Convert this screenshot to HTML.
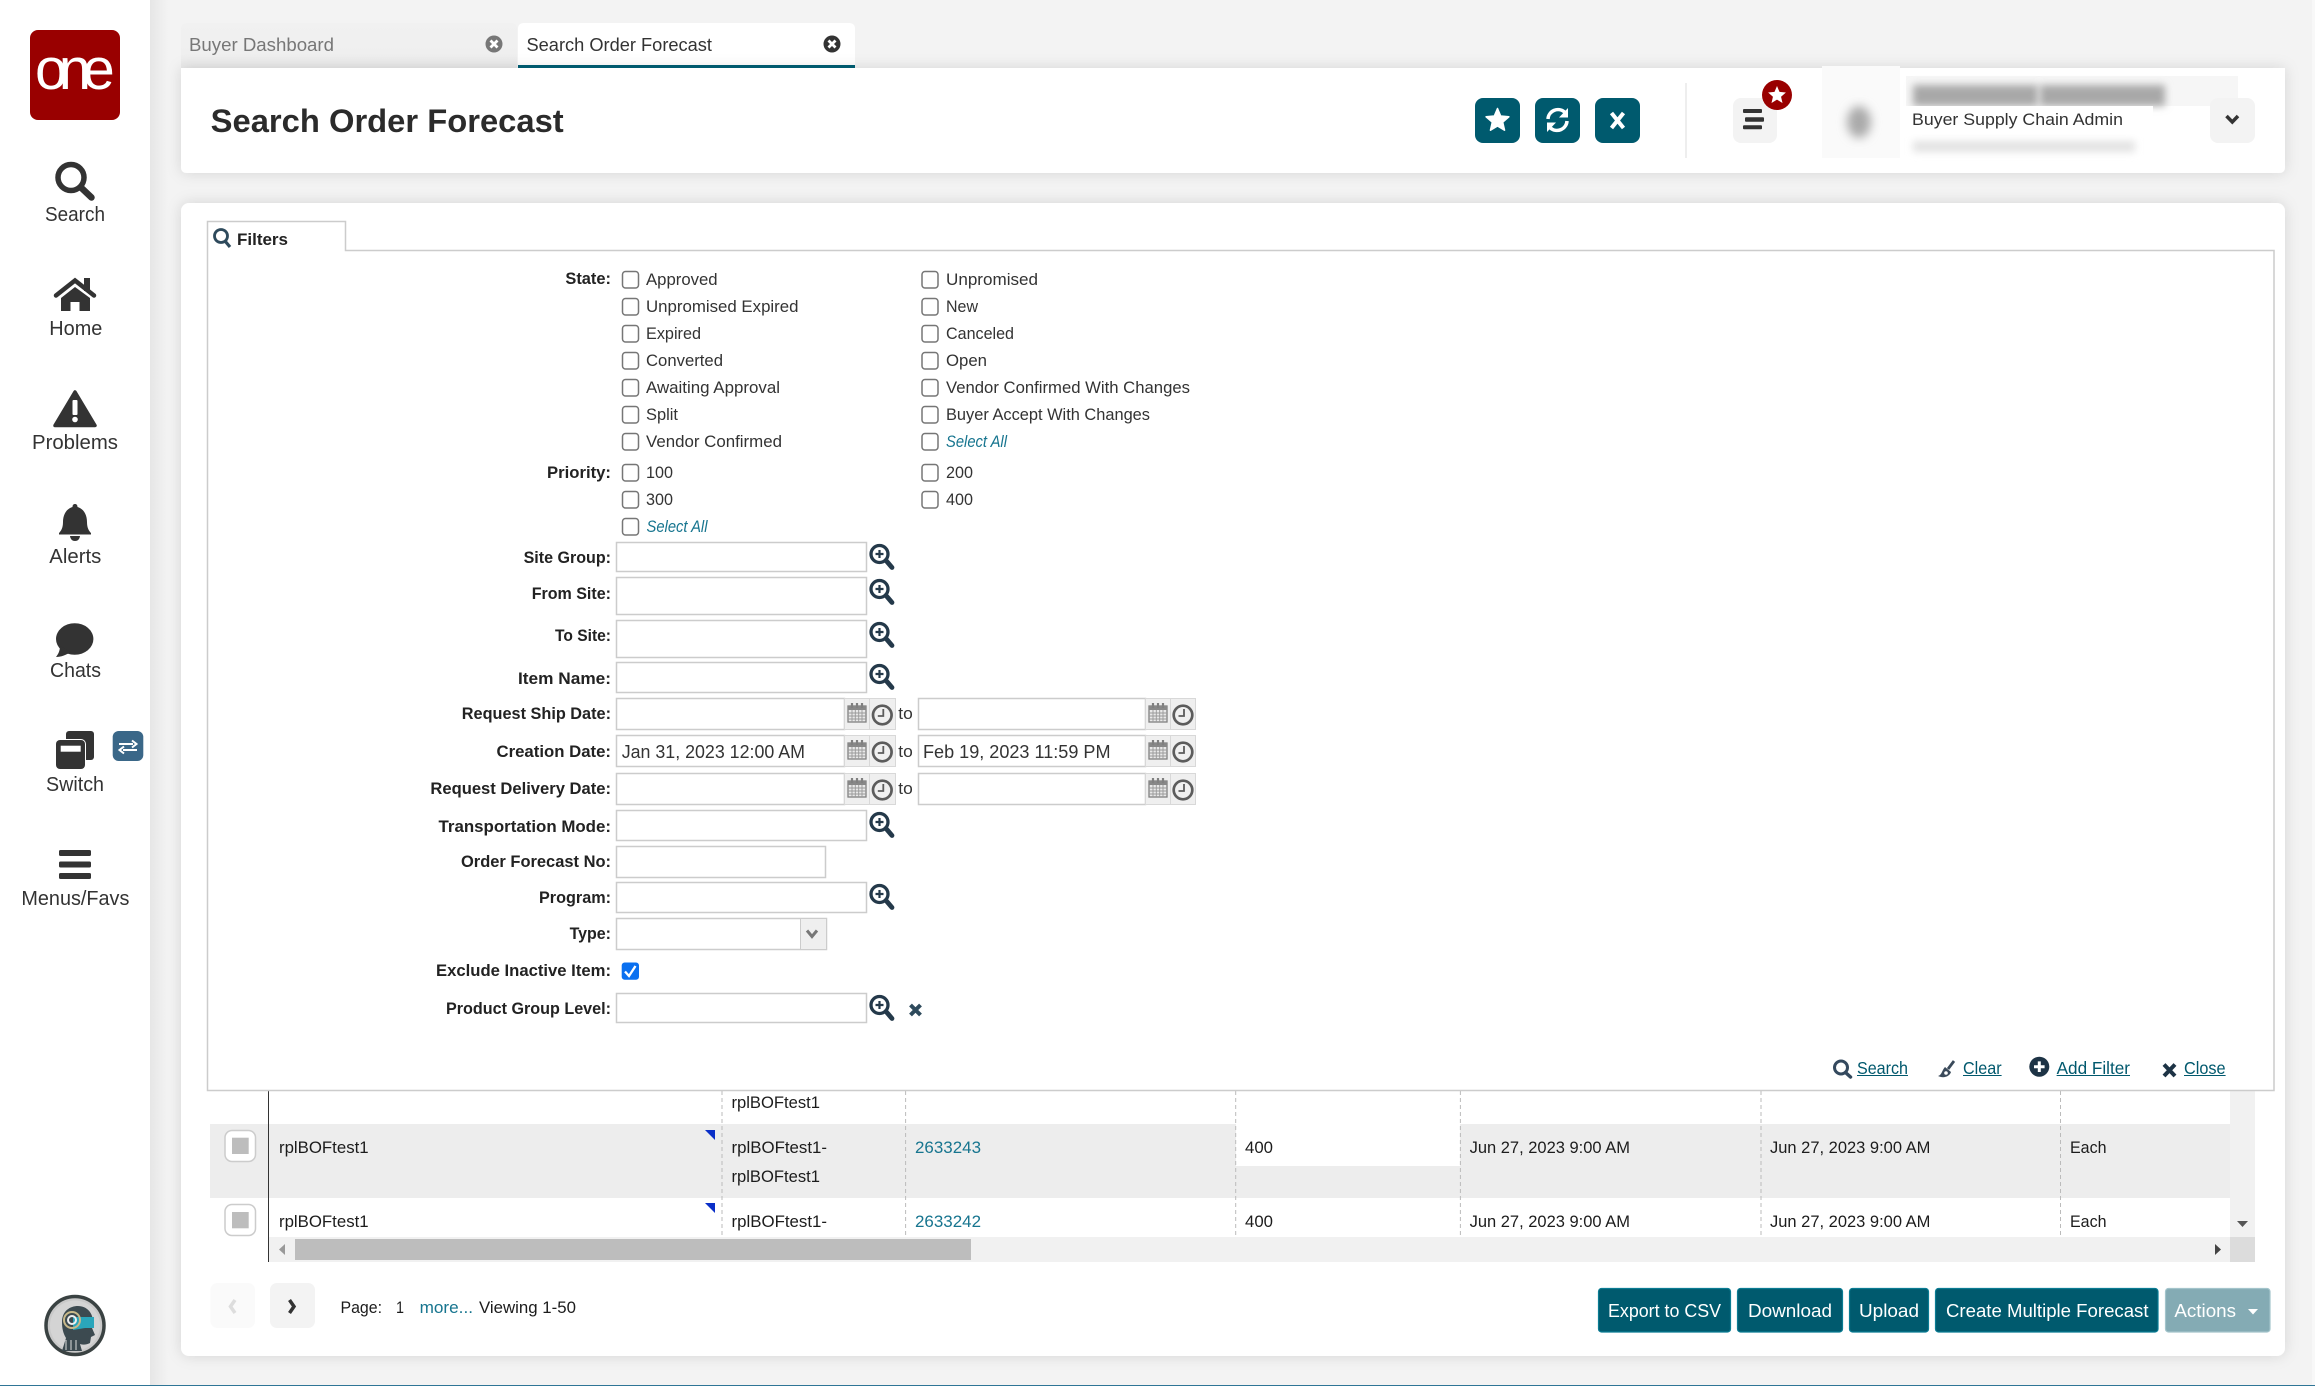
<!DOCTYPE html>
<html lang="en"><head><meta charset="utf-8"><title>Search Order Forecast</title>
<style>
html,body{margin:0;padding:0;background:#f3f3f3;width:2315px;height:1386px;overflow:hidden}
svg{display:block;font-family:"Liberation Sans",Arial,sans-serif}
.n{font-size:17px;fill:#333}
.b{font-size:17px;font-weight:700;fill:#222}
.s{font-size:20.5px;fill:#333;text-anchor:start}
.t{font-size:17px;fill:#1c1c1c}
.l{font-size:17px;fill:#17758f}
.i{font-size:16.5px;font-style:italic;fill:#17758f}
.w{font-size:18px;fill:#fff}
.f{font-size:17.5px;fill:#00586d}
.ib{fill:#fff;stroke:#ccc;stroke-width:1.5}
.c{fill:#fff;stroke:#767676;stroke-width:1.5}
.ad{fill:#efefef;stroke:#d8d8d8;stroke-width:1}
</style></head><body>
<svg xmlns="http://www.w3.org/2000/svg" width="2315" height="1386" viewBox="0 0 2315 1386">
<defs>
<linearGradient id="sh" x1="0" x2="1" y1="0" y2="0"><stop offset="0" stop-color="#e6e6e6"/><stop offset="1" stop-color="#f3f3f3"/></linearGradient>
<linearGradient id="tab" x1="0" x2="0" y1="0" y2="1"><stop offset="0" stop-color="#f1f1f1"/><stop offset=".7" stop-color="#efefef"/><stop offset="1" stop-color="#e8e8e8"/></linearGradient>
<filter id="card" x="-5%" y="-20%" width="110%" height="140%"><feDropShadow dx="0" dy="0" stdDeviation="7" flood-color="#000" flood-opacity=".13"/></filter>
<filter id="bl" x="-100%" y="-100%" width="300%" height="300%"><feGaussianBlur stdDeviation="5"/></filter>
<filter id="bl2" x="-30%" y="-100%" width="160%" height="300%"><feGaussianBlur stdDeviation="4"/></filter>
<g id="mag"><circle cx="0" cy="0" r="8.5" fill="#fff" stroke="#24394a" stroke-width="3.3"/><path d="M6.5 6.5L12.5 13.5" stroke="#24394a" stroke-width="4.8" stroke-linecap="round" fill="none"/><path d="M-4 0H4M0-4V4" stroke="#24394a" stroke-width="2.2"/></g>
<g id="cal"><rect x="-9" y="-7" width="18" height="16" fill="#e9e9e9" stroke="#808080" stroke-width="1.3"/><rect x="-9" y="-7" width="18" height="4" fill="#888"/><path d="M-5-10V-5M0-10V-5M5-10V-5" stroke="#808080" stroke-width="2.2"/><path d="M-9 0H9M-9 3H9M-9 6H9M-5-3V9M-1.7-3V9M1.7-3V9M5-3V9" stroke="#999" stroke-width=".9"/></g>
<g id="clk"><circle r="9.3" fill="#f0f0f0" stroke="#5c5c5c" stroke-width="2.7"/><path d="M1-6V1H-4.5" fill="none" stroke="#5c5c5c" stroke-width="1.8"/></g>
<path id="star" d="M0-12L3.2-4.45 11.4-3.7 5.2 1.7 7.05 9.7 0 5.5-7.05 9.7-5.2 1.7-11.4-3.7-3.2-4.45Z"/>
<g id="tc"><path d="M-3.5-3.5L3.5 3.5M3.5-3.5L-3.5 3.5" stroke="#fff" stroke-width="2.8"/></g>
</defs>

<!-- page -->
<rect width="2315" height="1386" fill="#f3f3f3"/>
<rect x="2312" y="0" width="3" height="1386" fill="#f8f8f8"/>
<rect x="150" y="0" width="18" height="1386" fill="url(#sh)"/>
<rect x="0" y="0" width="150" height="1386" fill="#fff"/>

<!-- logo -->
<rect x="30" y="30" width="90" height="90" rx="8" fill="#990000"/>
<text x="35" y="89" font-size="58" fill="#fff" letter-spacing="-8.5">one</text>

<!-- sidebar -->
<g fill="#333">
<circle cx="71" cy="177.5" r="13" fill="none" stroke="#333" stroke-width="5.5"/>
<path d="M81.5 188L91.5 197.5" stroke="#333" stroke-width="6.5" stroke-linecap="round"/>
<path d="M56 295.5L75 280.5 94 295.5" fill="none" stroke="#333" stroke-width="4.5" stroke-linecap="round"/>
<rect x="84" y="278" width="6" height="13"/>
<path d="M61 298L75 287 90 298V311H79.5V302H70.5V311H61Z"/>
<path d="M75 392L95 425.5H55Z" stroke="#333" stroke-width="3.5" stroke-linejoin="round"/>
<rect x="72.5" y="400" width="5" height="15" fill="#fff" rx="1"/><circle cx="75" cy="419.5" r="2.8" fill="#fff"/>
<path d="M75 504C76.5 504 77.5 505 77.5 507C84 509 87 515 87 522C87 528 89 531 91 533V534.5H59V533C61 531 63 528 63 522C63 515 66 509 72.5 507C72.5 505 73.5 504 75 504Z"/>
<path d="M70 536H80C79.5 539.5 77.5 541 75 541C72.5 541 70.5 539.5 70 536Z"/>
<ellipse cx="74.7" cy="639" rx="18.7" ry="15.8"/>
<path d="M60 646C60 651 58 654.5 56 657C61 657 66 655 71 652Z"/>
<rect x="66" y="731" width="28" height="29" rx="3"/>
<rect x="55" y="739" width="31" height="31" rx="5" fill="#fff"/>
<rect x="56" y="740" width="29" height="29" rx="4"/>
<rect x="60.7" y="745.7" width="20" height="6" fill="#fff"/>
<rect x="59" y="850" width="32" height="6" rx="1.5"/><rect x="59" y="861.5" width="32" height="6" rx="1.5"/><rect x="59" y="873" width="32" height="6" rx="1.5"/>
</g>
<rect x="112.7" y="731" width="30.6" height="30" rx="6" fill="#3a6788"/>
<path d="M119 744H133M132 740.5L136.5 744 132 747.5M137 750H123M124 746.5L119.5 750 124 753.5" fill="none" stroke="#fff" stroke-width="2"/>
<text class="s" x="45" y="221" textLength="60" lengthAdjust="spacingAndGlyphs">Search</text>
<text class="s" x="49.3" y="335" textLength="53" lengthAdjust="spacingAndGlyphs">Home</text>
<text class="s" x="32" y="449" textLength="86" lengthAdjust="spacingAndGlyphs">Problems</text>
<text class="s" x="49.3" y="563" textLength="52" lengthAdjust="spacingAndGlyphs">Alerts</text>
<text class="s" x="50" y="677" textLength="51" lengthAdjust="spacingAndGlyphs">Chats</text>
<text class="s" x="46" y="791" textLength="58" lengthAdjust="spacingAndGlyphs">Switch</text>
<text class="s" x="21.4" y="905" textLength="108" lengthAdjust="spacingAndGlyphs">Menus/Favs</text>

<!-- avatar -->
<circle cx="75" cy="1325.5" r="29" fill="#c9c9c9" stroke="#3a4242" stroke-width="3.5"/>
<circle cx="75" cy="1325.5" r="25" fill="#d4d4d4"/>
<path d="M62 1322C62 1311 70 1306 78 1306C87 1306 93 1313 93 1322L92 1328 95 1335 91 1337 90 1343C86 1345 83 1345 80 1344L82 1351H62L66 1338C63 1333 62 1328 62 1322Z" fill="#3c4a50"/>
<path d="M73 1317H94V1328H85L73 1330Z" fill="#2aa6bb"/>
<circle cx="72" cy="1320" r="8" fill="none" stroke="#c9b98a" stroke-width="2"/><circle cx="72" cy="1320" r="4" fill="none" stroke="#eee" stroke-width="2"/>
<path d="M66 1340V1350M71 1340V1350M76 1340V1350" stroke="#ddd" stroke-width="1"/>

<!-- tabs -->
<path d="M181 68V29Q181 23 187 23H511Q517 23 517 29V68Z" fill="url(#tab)"/>
<path d="M518 68V29Q518 23 524 23H849Q855 23 855 29V68Z" fill="#fff"/>
<text x="189" y="51" font-size="18" fill="#777" textLength="145" lengthAdjust="spacingAndGlyphs">Buyer Dashboard</text>
<text x="526.5" y="51" font-size="18" fill="#333" textLength="185.5" lengthAdjust="spacingAndGlyphs">Search Order Forecast</text>
<circle cx="494" cy="44" r="8.5" fill="#777"/><use href="#tc" x="494" y="44"/>
<circle cx="832" cy="44" r="8.5" fill="#333"/><use href="#tc" x="832" y="44"/>

<!-- header card -->
<path d="M181 68H2285V167Q2285 173 2279 173H187Q181 173 181 167Z" fill="#fff" filter="url(#card)"/>
<rect x="518" y="65" width="337" height="3" fill="#005a6e"/>
<text x="210.7" y="132" font-size="32" font-weight="700" fill="#2b2b2b" textLength="353" lengthAdjust="spacingAndGlyphs">Search Order Forecast</text>
<rect x="1475" y="98" width="45" height="45" rx="8" fill="#005a6e"/>
<rect x="1535" y="98" width="45" height="45" rx="8" fill="#005a6e"/>
<rect x="1595" y="98" width="45" height="45" rx="8" fill="#005a6e"/>
<use href="#star" x="1497.5" y="120.5" fill="#fff" stroke="#fff" stroke-width="1.5" stroke-linejoin="round"/>
<g transform="translate(1557.5 120)" fill="#fff" stroke="none">
<path d="M-9.5-1A10 10 0 0 1 7-8" fill="none" stroke="#fff" stroke-width="3.5"/><path d="M10.5-12V-2.5H1.5Z"/>
<path d="M9.5 1A10 10 0 0 1-7 8" fill="none" stroke="#fff" stroke-width="3.5"/><path d="M-10.5 12V2.5H-1.5Z"/>
</g>
<path d="M1611.5 113L1623.5 128M1623.5 113L1611.5 128" stroke="#fff" stroke-width="4"/>
<rect x="1685" y="83" width="2" height="75" fill="#eee"/>
<rect x="1733" y="98" width="44" height="45" rx="8" fill="#f3f3f3"/>
<g fill="#333"><rect x="1743" y="109" width="19" height="4" rx="1"/><rect x="1745" y="117.3" width="19" height="4.5" rx="1"/><rect x="1743" y="125.3" width="19" height="4" rx="1"/></g>
<circle cx="1777" cy="95" r="15" fill="#990000"/>
<use href="#star" x="1777" y="95.5" fill="#fff" transform="translate(1777 95) scale(.78) translate(-1777 -95)"/>
<!-- blurred profile -->
<rect x="1822" y="66" width="78" height="92" fill="#fafafa"/>
<ellipse cx="1859" cy="122" rx="12" ry="16" fill="#aaa" filter="url(#bl)"/>
<rect x="1906" y="76" width="332" height="30" fill="#f6f6f6"/>
<rect x="1913" y="85" width="125" height="21" fill="#a8a8a8" filter="url(#bl2)"/>
<rect x="2040" y="85" width="125" height="21" fill="#a8a8a8" filter="url(#bl2)"/>
<rect x="1906" y="134" width="240" height="24" fill="#fff"/>
<rect x="1913" y="141" width="222" height="11" fill="#e2e2e2" filter="url(#bl2)"/>
<rect x="1900" y="106" width="253" height="28" fill="#fff"/>
<text x="1912" y="125" font-size="17" fill="#333" textLength="211" lengthAdjust="spacingAndGlyphs">Buyer Supply Chain Admin</text>
<rect x="2210" y="98" width="45" height="45" rx="8" fill="#f3f3f3"/>
<path d="M2226.5 116L2232.3 122 2238 116" fill="none" stroke="#333" stroke-width="3.5"/>

<!-- main card -->
<rect x="181" y="203" width="2104" height="1153" rx="8" fill="#fff" filter="url(#card)"/>

<!-- table -->
<rect x="210" y="1124" width="2020" height="74" fill="#ededed"/>
<rect x="1236" y="1124" width="224" height="42" fill="#fff"/>
<rect x="2230" y="1091" width="25" height="146" fill="#f1f1f1"/>
<path d="M2237 1221H2248L2242.5 1227Z" fill="#555"/>
<path d="M722 1091V1237M905.6 1091V1237M1235.7 1091V1237M1460.4 1091V1237M1761 1091V1237M2060.5 1091V1237" stroke="#bbb" stroke-width="1" stroke-dasharray="4 3"/>
<rect x="268" y="1091" width="1" height="171" fill="#333"/>
<g><rect x="225" y="1130.5" width="30.5" height="31" rx="7" fill="#fff" stroke="#ccc" stroke-width="1.5"/><rect x="232" y="1137.7" width="16.7" height="16.3" fill="#bdbdbd"/>
<rect x="225" y="1204.5" width="30.5" height="31" rx="7" fill="#fff" stroke="#ccc" stroke-width="1.5"/><rect x="232" y="1212" width="16.7" height="16.3" fill="#bdbdbd"/></g>
<path d="M705 1130H715V1140ZM705 1203H715V1213Z" fill="#0a2fc8"/>
<text class="t" x="279" y="1153" textLength="89.6" lengthAdjust="spacingAndGlyphs">rplBOFtest1</text>
<text class="t" x="279" y="1227" textLength="89.6" lengthAdjust="spacingAndGlyphs">rplBOFtest1</text>
<text class="t" x="731.5" y="1108" textLength="88.5" lengthAdjust="spacingAndGlyphs">rplBOFtest1</text>
<text class="t" x="731.5" y="1153" textLength="95.5" lengthAdjust="spacingAndGlyphs">rplBOFtest1-</text>
<text class="t" x="731.5" y="1182" textLength="88.5" lengthAdjust="spacingAndGlyphs">rplBOFtest1</text>
<text class="t" x="731.5" y="1227" textLength="95.5" lengthAdjust="spacingAndGlyphs">rplBOFtest1-</text>
<text class="l" x="915" y="1153" textLength="66" lengthAdjust="spacingAndGlyphs">2633243</text>
<text class="l" x="915" y="1227" textLength="66" lengthAdjust="spacingAndGlyphs">2633242</text>
<text class="t" x="1245" y="1153" textLength="28" lengthAdjust="spacingAndGlyphs">400</text>
<text class="t" x="1245" y="1227" textLength="28" lengthAdjust="spacingAndGlyphs">400</text>
<text class="t" x="1469.6" y="1153" textLength="160.4" lengthAdjust="spacingAndGlyphs">Jun 27, 2023 9:00 AM</text>
<text class="t" x="1469.6" y="1227" textLength="160.4" lengthAdjust="spacingAndGlyphs">Jun 27, 2023 9:00 AM</text>
<text class="t" x="1770" y="1153" textLength="160.4" lengthAdjust="spacingAndGlyphs">Jun 27, 2023 9:00 AM</text>
<text class="t" x="1770" y="1227" textLength="160.4" lengthAdjust="spacingAndGlyphs">Jun 27, 2023 9:00 AM</text>
<text class="t" x="2070" y="1153" textLength="36.5" lengthAdjust="spacingAndGlyphs">Each</text>
<text class="t" x="2070" y="1227" textLength="36.5" lengthAdjust="spacingAndGlyphs">Each</text>
<rect x="269" y="1237" width="1961" height="25" fill="#f1f1f1"/>
<rect x="2230" y="1237" width="25" height="25" fill="#dcdcdc"/>
<rect x="295" y="1239" width="676" height="21" fill="#bdbdbd"/>
<path d="M285 1244V1255L279 1249.5Z" fill="#999"/>
<path d="M2215 1244V1255L2221 1249.5Z" fill="#444"/>

<!-- filter panel -->
<path d="M207.5 221.5H345.5V250.5H2274V1090.5H207.5Z" fill="#fff" stroke="#ccc" stroke-width="1.5"/>
<circle cx="221" cy="236" r="6.5" fill="none" stroke="#2e4a5c" stroke-width="2.8"/><path d="M225 241L230 247" stroke="#2e4a5c" stroke-width="3.2"/>
<text x="237" y="245" font-size="17" font-weight="700" fill="#222" textLength="51" lengthAdjust="spacingAndGlyphs">Filters</text>

<!-- labels -->
<text class="b" x="565.4" y="284" textLength="45.6" lengthAdjust="spacingAndGlyphs">State:</text>
<text class="b" x="547" y="478" textLength="64" lengthAdjust="spacingAndGlyphs">Priority:</text>
<text class="b" x="523.6" y="563" textLength="87.4" lengthAdjust="spacingAndGlyphs">Site Group:</text>
<text class="b" x="531.7" y="599" textLength="79.3" lengthAdjust="spacingAndGlyphs">From Site:</text>
<text class="b" x="555" y="641" textLength="56" lengthAdjust="spacingAndGlyphs">To Site:</text>
<text class="b" x="518" y="684" textLength="93" lengthAdjust="spacingAndGlyphs">Item Name:</text>
<text class="b" x="461.8" y="719" textLength="149.2" lengthAdjust="spacingAndGlyphs">Request Ship Date:</text>
<text class="b" x="496.5" y="757" textLength="114.5" lengthAdjust="spacingAndGlyphs">Creation Date:</text>
<text class="b" x="430.4" y="794" textLength="180.6" lengthAdjust="spacingAndGlyphs">Request Delivery Date:</text>
<text class="b" x="438.5" y="832" textLength="172.5" lengthAdjust="spacingAndGlyphs">Transportation Mode:</text>
<text class="b" x="461" y="867" textLength="150" lengthAdjust="spacingAndGlyphs">Order Forecast No:</text>
<text class="b" x="539" y="903" textLength="72" lengthAdjust="spacingAndGlyphs">Program:</text>
<text class="b" x="569.6" y="939" textLength="41.4" lengthAdjust="spacingAndGlyphs">Type:</text>
<text class="b" x="436" y="976" textLength="175" lengthAdjust="spacingAndGlyphs">Exclude Inactive Item:</text>
<text class="b" x="446" y="1014" textLength="165" lengthAdjust="spacingAndGlyphs">Product Group Level:</text>

<!-- checkboxes -->
<g>
<rect class="c" x="622.5" y="271.5" width="16" height="16.5" rx="3"/>
<rect class="c" x="622.5" y="298.5" width="16" height="16.5" rx="3"/>
<rect class="c" x="622.5" y="325.5" width="16" height="16.5" rx="3"/>
<rect class="c" x="622.5" y="352.5" width="16" height="16.5" rx="3"/>
<rect class="c" x="622.5" y="379.5" width="16" height="16.5" rx="3"/>
<rect class="c" x="622.5" y="406.5" width="16" height="16.5" rx="3"/>
<rect class="c" x="622.5" y="433.5" width="16" height="16.5" rx="3"/>
<rect class="c" x="622.5" y="464.5" width="16" height="16.5" rx="3"/>
<rect class="c" x="622.5" y="491.5" width="16" height="16.5" rx="3"/>
<rect class="c" x="622.5" y="518.5" width="16" height="16.5" rx="3"/>
<rect class="c" x="922" y="271.5" width="16" height="16.5" rx="3"/>
<rect class="c" x="922" y="298.5" width="16" height="16.5" rx="3"/>
<rect class="c" x="922" y="325.5" width="16" height="16.5" rx="3"/>
<rect class="c" x="922" y="352.5" width="16" height="16.5" rx="3"/>
<rect class="c" x="922" y="379.5" width="16" height="16.5" rx="3"/>
<rect class="c" x="922" y="406.5" width="16" height="16.5" rx="3"/>
<rect class="c" x="922" y="433.5" width="16" height="16.5" rx="3"/>
<rect class="c" x="922" y="464.5" width="16" height="16.5" rx="3"/>
<rect class="c" x="922" y="491.5" width="16" height="16.5" rx="3"/>
</g>
<text class="n" x="646" y="285" textLength="71.6" lengthAdjust="spacingAndGlyphs">Approved</text>
<text class="n" x="646" y="312" textLength="152.5" lengthAdjust="spacingAndGlyphs">Unpromised Expired</text>
<text class="n" x="646" y="339" textLength="55" lengthAdjust="spacingAndGlyphs">Expired</text>
<text class="n" x="646" y="366" textLength="77" lengthAdjust="spacingAndGlyphs">Converted</text>
<text class="n" x="646" y="393" textLength="134" lengthAdjust="spacingAndGlyphs">Awaiting Approval</text>
<text class="n" x="646" y="420" textLength="32" lengthAdjust="spacingAndGlyphs">Split</text>
<text class="n" x="646" y="447" textLength="136" lengthAdjust="spacingAndGlyphs">Vendor Confirmed</text>
<text class="n" x="646" y="478" textLength="27" lengthAdjust="spacingAndGlyphs">100</text>
<text class="n" x="646" y="505" textLength="27" lengthAdjust="spacingAndGlyphs">300</text>
<text class="i" x="646.5" y="532" textLength="61" lengthAdjust="spacingAndGlyphs">Select All</text>
<text class="n" x="946" y="285" textLength="92" lengthAdjust="spacingAndGlyphs">Unpromised</text>
<text class="n" x="946" y="312" textLength="32" lengthAdjust="spacingAndGlyphs">New</text>
<text class="n" x="946" y="339" textLength="68" lengthAdjust="spacingAndGlyphs">Canceled</text>
<text class="n" x="946" y="366" textLength="41" lengthAdjust="spacingAndGlyphs">Open</text>
<text class="n" x="946" y="393" textLength="244" lengthAdjust="spacingAndGlyphs">Vendor Confirmed With Changes</text>
<text class="n" x="946" y="420" textLength="204" lengthAdjust="spacingAndGlyphs">Buyer Accept With Changes</text>
<text class="i" x="946" y="447" textLength="61" lengthAdjust="spacingAndGlyphs">Select All</text>
<text class="n" x="946" y="478" textLength="27" lengthAdjust="spacingAndGlyphs">200</text>
<text class="n" x="946" y="505" textLength="27" lengthAdjust="spacingAndGlyphs">400</text>

<!-- inputs -->
<rect class="ib" x="616.5" y="542.5" width="250" height="29"/>
<rect class="ib" x="616.5" y="577.5" width="250" height="37"/>
<rect class="ib" x="616.5" y="620.5" width="250" height="37"/>
<rect class="ib" x="616.5" y="662.5" width="250" height="30"/>
<rect class="ib" x="616.5" y="810.5" width="250" height="30"/>
<rect class="ib" x="616.5" y="846.5" width="209" height="31"/>
<rect class="ib" x="616.5" y="882.5" width="250" height="30"/>
<rect class="ib" x="616.5" y="918.5" width="210" height="31"/>
<rect x="800.5" y="918.5" width="26" height="31" fill="#efefef" stroke="#ccc" stroke-width="1"/>
<path d="M807 930.5L812 936.5 817 930.5" fill="none" stroke="#777" stroke-width="3"/>
<rect class="ib" x="616.5" y="993.5" width="250" height="29"/>
<use href="#mag" x="879.5" y="554"/><use href="#mag" x="879.5" y="589"/><use href="#mag" x="879.5" y="632"/><use href="#mag" x="879.5" y="674"/><use href="#mag" x="879.5" y="822"/><use href="#mag" x="879.5" y="894"/><use href="#mag" x="879.5" y="1005"/>
<path d="M910.5 1005L920.5 1015M920.5 1005L910.5 1015" stroke="#2e4a5c" stroke-width="4"/>

<!-- date rows -->
<g>
<rect class="ib" x="616.5" y="698.5" width="228" height="31"/><rect class="ad" x="844.5" y="698.5" width="25" height="31"/><rect class="ad" x="869.5" y="698.5" width="26" height="31"/>
<rect class="ib" x="918.5" y="698.5" width="227" height="31"/><rect class="ad" x="1145.5" y="698.5" width="25" height="31"/><rect class="ad" x="1170.5" y="698.5" width="25" height="31"/>
<rect class="ib" x="616.5" y="735.5" width="228" height="31"/><rect class="ad" x="844.5" y="735.5" width="25" height="31"/><rect class="ad" x="869.5" y="735.5" width="26" height="31"/>
<rect class="ib" x="918.5" y="735.5" width="227" height="31"/><rect class="ad" x="1145.5" y="735.5" width="25" height="31"/><rect class="ad" x="1170.5" y="735.5" width="25" height="31"/>
<rect class="ib" x="616.5" y="773.5" width="228" height="31"/><rect class="ad" x="844.5" y="773.5" width="25" height="31"/><rect class="ad" x="869.5" y="773.5" width="26" height="31"/>
<rect class="ib" x="918.5" y="773.5" width="227" height="31"/><rect class="ad" x="1145.5" y="773.5" width="25" height="31"/><rect class="ad" x="1170.5" y="773.5" width="25" height="31"/>
</g>
<use href="#cal" x="857" y="713"/><use href="#clk" x="882.3" y="715"/><use href="#cal" x="1158" y="713"/><use href="#clk" x="1183" y="715"/>
<use href="#cal" x="857" y="750"/><use href="#clk" x="882.3" y="752"/><use href="#cal" x="1158" y="750"/><use href="#clk" x="1183" y="752"/>
<use href="#cal" x="857" y="788"/><use href="#clk" x="882.3" y="790"/><use href="#cal" x="1158" y="788"/><use href="#clk" x="1183" y="790"/>
<text class="n" x="898.3" y="719" textLength="14.5" lengthAdjust="spacingAndGlyphs">to</text>
<text class="n" x="898.3" y="757" textLength="14.5" lengthAdjust="spacingAndGlyphs">to</text>
<text class="n" x="898.3" y="794" textLength="14.5" lengthAdjust="spacingAndGlyphs">to</text>
<text x="621.7" y="758" font-size="18" fill="#333" textLength="183.3" lengthAdjust="spacingAndGlyphs">Jan 31, 2023 12:00 AM</text>
<text x="923" y="758" font-size="18" fill="#333" textLength="187.5" lengthAdjust="spacingAndGlyphs">Feb 19, 2023 11:59 PM</text>

<!-- exclude checkbox -->
<rect x="621.7" y="962.5" width="17.3" height="17.3" rx="3" fill="#0a70f0"/>
<path d="M625 971.5L629 976 635.5 966" fill="none" stroke="#fff" stroke-width="2.3"/>

<!-- filter actions -->
<circle cx="1841" cy="1067.5" r="6.5" fill="none" stroke="#34495e" stroke-width="3"/><path d="M1845.5 1072.5L1850.5 1077" stroke="#34495e" stroke-width="3.5" stroke-linecap="round"/>
<path d="M1954 1061L1948 1069" stroke="#3a4a5a" stroke-width="2.8"/><path d="M1945 1067L1951 1072C1950 1076 1944 1079 1938 1076C1942 1075 1942 1070 1945 1067Z" fill="#3a4a5a"/><circle cx="1946" cy="1073" r="1.8" fill="#fff"/>
<circle cx="2039.3" cy="1066.7" r="10" fill="#1d3345"/><path d="M2034 1066.7H2044.6M2039.3 1061.4V1072" stroke="#fff" stroke-width="3"/>
<path d="M2164 1064.5L2175 1076M2175 1064.5L2164 1076" stroke="#1d3345" stroke-width="4"/>
<text class="f" x="1857" y="1074" textLength="51" lengthAdjust="spacingAndGlyphs">Search</text><rect x="1857" y="1075" width="51" height="1" fill="#00586d"/>
<text class="f" x="1963" y="1074" textLength="38.6" lengthAdjust="spacingAndGlyphs">Clear</text><rect x="1963" y="1075" width="38.6" height="1" fill="#00586d"/>
<text class="f" x="2056.6" y="1074" textLength="73.4" lengthAdjust="spacingAndGlyphs">Add Filter</text><rect x="2056.6" y="1075" width="73.4" height="1" fill="#00586d"/>
<text class="f" x="2184" y="1074" textLength="41.6" lengthAdjust="spacingAndGlyphs">Close</text><rect x="2184" y="1075" width="41.6" height="1" fill="#00586d"/>

<!-- pagination -->
<rect x="210.5" y="1283" width="44.5" height="45" rx="7" fill="#fafafa"/>
<rect x="270" y="1283" width="45" height="45" rx="7" fill="#f3f3f3"/>
<path d="M235 1300L230.5 1306.5 235 1313" fill="none" stroke="#ddd" stroke-width="3.5"/>
<path d="M289.5 1300L294 1306.5 289.5 1313" fill="none" stroke="#333" stroke-width="3.5"/>
<text class="t" x="340.5" y="1313" textLength="41.5" lengthAdjust="spacingAndGlyphs">Page:</text>
<text class="t" x="396" y="1313" textLength="8" lengthAdjust="spacingAndGlyphs">1</text>
<text class="l" x="419.6" y="1313" textLength="53.4" lengthAdjust="spacingAndGlyphs">more...</text>
<text class="t" x="479" y="1313" textLength="97" lengthAdjust="spacingAndGlyphs">Viewing 1-50</text>

<!-- buttons -->
<g fill="#005a6e" stroke="#0a7c93" stroke-width="1.2">
<rect x="1598.5" y="1288.5" width="132" height="43.5" rx="3"/>
<rect x="1737.5" y="1288.5" width="105" height="43.5" rx="3"/>
<rect x="1849.5" y="1288.5" width="79" height="43.5" rx="3"/>
<rect x="1935.5" y="1288.5" width="222.5" height="43.5" rx="3"/>
</g>
<rect x="2165.5" y="1288.5" width="104.5" height="43.5" rx="3" fill="#84abb4" stroke="#a3c4cb" stroke-width="1.2"/>
<text class="w" x="1608" y="1317" textLength="113" lengthAdjust="spacingAndGlyphs">Export to CSV</text>
<text class="w" x="1748" y="1317" textLength="84" lengthAdjust="spacingAndGlyphs">Download</text>
<text class="w" x="1859" y="1317" textLength="60" lengthAdjust="spacingAndGlyphs">Upload</text>
<text class="w" x="1946" y="1317" textLength="202.5" lengthAdjust="spacingAndGlyphs">Create Multiple Forecast</text>
<text class="w" x="2174.4" y="1317" textLength="61.6" lengthAdjust="spacingAndGlyphs">Actions</text>
<path d="M2248 1309H2258L2253 1314.5Z" fill="#fff"/>

<!-- bottom line -->
<rect x="0" y="1385" width="2315" height="1" fill="#2f7596"/>
</svg>
</body></html>
